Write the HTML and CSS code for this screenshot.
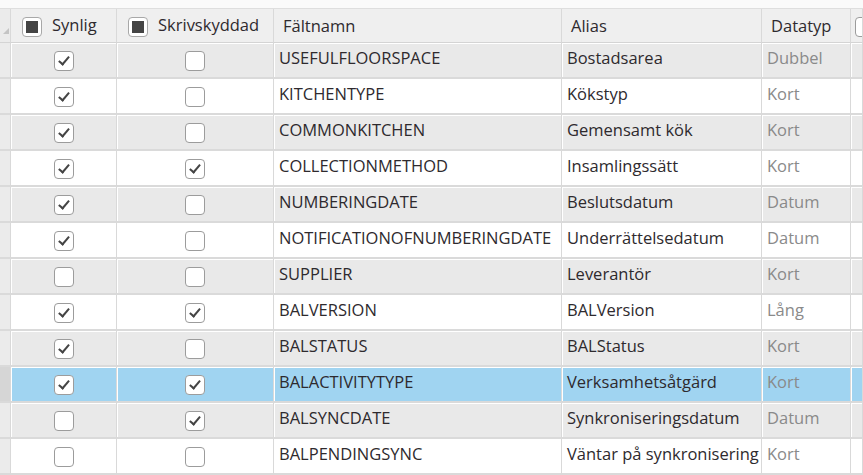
FILE: index.html
```html
<!DOCTYPE html>
<html lang="sv">
<head>
    <meta charset="UTF-8">
    <title>Fält</title>
    <link rel="stylesheet" href="styles.css">
</head>
<body>
    <div class="topbar"></div>
    <table class="fields">
        <colgroup>
            <col class="c-rh"><col class="c-vis"><col class="c-ro"><col class="c-name"><col class="c-alias"><col class="c-type"><col>
        </colgroup>
        <thead>
            <tr>
                <th class="rh"><span class="corner"></span></th>
                <th class="hcheck"><span class="box partial"></span>Synlig</th>
                <th class="hcheck"><span class="box partial"></span>Skrivskyddad</th>
                <th>Fältnamn</th>
                <th>Alias</th>
                <th>Datatyp</th>
                <th class="last"><span class="box"></span></th>
            </tr>
        </thead>
        <tbody>
            <tr class="alt">
                <td class="rh"></td>
                <td class="chk"><span class="box on"></span></td>
                <td class="chk"><span class="box"></span></td>
                <td>USEFULFLOORSPACE</td>
                <td>Bostadsarea</td>
                <td class="type">Dubbel</td>
                <td></td>
            </tr>
            <tr>
                <td class="rh"></td>
                <td class="chk"><span class="box on"></span></td>
                <td class="chk"><span class="box"></span></td>
                <td>KITCHENTYPE</td>
                <td>Kökstyp</td>
                <td class="type">Kort</td>
                <td></td>
            </tr>
            <tr class="alt">
                <td class="rh"></td>
                <td class="chk"><span class="box on"></span></td>
                <td class="chk"><span class="box"></span></td>
                <td>COMMONKITCHEN</td>
                <td>Gemensamt kök</td>
                <td class="type">Kort</td>
                <td></td>
            </tr>
            <tr>
                <td class="rh"></td>
                <td class="chk"><span class="box on"></span></td>
                <td class="chk"><span class="box on"></span></td>
                <td>COLLECTIONMETHOD</td>
                <td>Insamlingssätt</td>
                <td class="type">Kort</td>
                <td></td>
            </tr>
            <tr class="alt">
                <td class="rh"></td>
                <td class="chk"><span class="box on"></span></td>
                <td class="chk"><span class="box"></span></td>
                <td>NUMBERINGDATE</td>
                <td>Beslutsdatum</td>
                <td class="type">Datum</td>
                <td></td>
            </tr>
            <tr>
                <td class="rh"></td>
                <td class="chk"><span class="box on"></span></td>
                <td class="chk"><span class="box"></span></td>
                <td>NOTIFICATIONOFNUMBERINGDATE</td>
                <td>Underrättelsedatum</td>
                <td class="type">Datum</td>
                <td></td>
            </tr>
            <tr class="alt">
                <td class="rh"></td>
                <td class="chk"><span class="box"></span></td>
                <td class="chk"><span class="box"></span></td>
                <td>SUPPLIER</td>
                <td>Leverantör</td>
                <td class="type">Kort</td>
                <td></td>
            </tr>
            <tr>
                <td class="rh"></td>
                <td class="chk"><span class="box on"></span></td>
                <td class="chk"><span class="box on"></span></td>
                <td>BALVERSION</td>
                <td>BALVersion</td>
                <td class="type">Lång</td>
                <td></td>
            </tr>
            <tr class="alt">
                <td class="rh"></td>
                <td class="chk"><span class="box on"></span></td>
                <td class="chk"><span class="box"></span></td>
                <td>BALSTATUS</td>
                <td>BALStatus</td>
                <td class="type">Kort</td>
                <td></td>
            </tr>
            <tr class="selected">
                <td class="rh"></td>
                <td class="chk"><span class="box on"></span></td>
                <td class="chk"><span class="box on"></span></td>
                <td>BALACTIVITYTYPE</td>
                <td>Verksamhetsåtgärd</td>
                <td class="type">Kort</td>
                <td></td>
            </tr>
            <tr class="alt">
                <td class="rh"></td>
                <td class="chk"><span class="box"></span></td>
                <td class="chk"><span class="box on"></span></td>
                <td>BALSYNCDATE</td>
                <td>Synkroniseringsdatum</td>
                <td class="type">Datum</td>
                <td></td>
            </tr>
            <tr>
                <td class="rh"></td>
                <td class="chk"><span class="box"></span></td>
                <td class="chk"><span class="box"></span></td>
                <td>BALPENDINGSYNC</td>
                <td>Väntar på synkronisering</td>
                <td class="type">Kort</td>
                <td></td>
            </tr>
        </tbody>
    </table>
</body>
</html>
```
FILE: styles.css
```css
body {
    margin: 0;
    background-color: #fff;
    font-family: "Open Sans", "Noto Sans", sans-serif;
    font-size: 16.5px;
    color: #2e2a2e;
    overflow: hidden;
}
.topbar {
    height: 8px;
    background-color: #fafafa;
    border-bottom: 1px solid #dedede;
}
.fields {
    width: 863px;
    table-layout: fixed;
    border-collapse: separate;
    border-spacing: 0;
}
.c-rh { width: 11px; }
.c-vis { width: 106px; }
.c-ro { width: 157px; }
.c-name { width: 288px; }
.c-alias { width: 200px; }
.c-type { width: 89px; }

th, td {
    padding: 0 5px;
    white-space: nowrap;
    overflow: hidden;
    border-right: 1px solid #d9d9d9;
    text-align: left;
    box-sizing: border-box;
}
th {
    height: 34px;
    font-weight: normal;
    background-color: #efefef;
    border-bottom: 1px solid #d4d4d4;
    padding-left: 9px;
    padding-bottom: 1px;
}
td {
    height: 36px;
    border-bottom: 2px solid #dadada;
    box-shadow: inset 1px 1px 0 #fff;
    padding-bottom: 5px;
}
tr.alt td {
    background-color: #e9e9e9;
}
tr.selected td {
    background-color: #a0d4f1;
}
td.rh, th.rh {
    padding: 0;
    background-color: #ebebeb;
    box-shadow: none;
    position: relative;
}
tr.alt td.rh {
    background-color: #ebebeb;
}
tr.selected td.rh {
    background-color: #d6d6d6;
}
.corner {
    position: absolute;
    left: 3px;
    top: 19px;
    width: 0;
    height: 0;
    border-left: 6px solid transparent;
    border-bottom: 6px solid #c4c4c4;
}
td.type {
    color: #8a8a8a;
}
td.chk {
    text-align: center;
    padding: 0 0 2px;
}
th.hcheck {
    padding-left: 11px;
}
th.last {
    padding-left: 4px;
}

.box {
    display: inline-block;
    box-sizing: border-box;
    width: 20px;
    height: 20px;
    border: 1px solid #9c9c9c;
    border-radius: 4px;
    background-color: #fff;
    vertical-align: middle;
    position: relative;
}
.box.on::after {
    content: "";
    position: absolute;
    left: 6px;
    top: 2px;
    width: 4px;
    height: 9px;
    border-right: 2px solid #444;
    border-bottom: 2px solid #444;
    transform: rotate(40deg);
}
.box.partial {
    margin-right: 10px;
    border-color: #a8a8a8;
}
.box.partial::after {
    content: "";
    position: absolute;
    left: 3px;
    top: 3px;
    width: 12px;
    height: 12px;
    background-color: #444;
}
```
